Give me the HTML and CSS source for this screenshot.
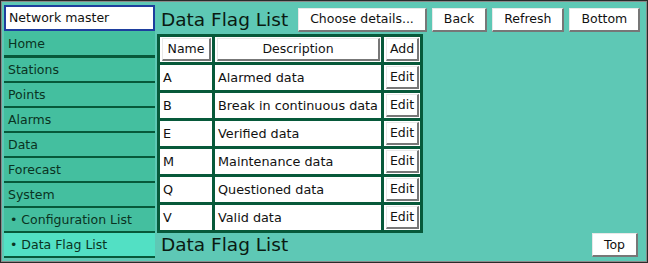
FILE: index.html
```html
<!DOCTYPE html>
<html>
<head>
<meta charset="utf-8">
<link rel="stylesheet" href="styles.css">
</head>
<body>
<div class="frame">
  <nav class="sidebar">
    <div class="network">Network master</div>
    <a class="item home">Home</a>
    <a class="item">Stations</a>
    <a class="item">Points</a>
    <a class="item">Alarms</a>
    <a class="item">Data</a>
    <a class="item">Forecast</a>
    <a class="item">System</a>
    <a class="item sub">• Configuration List</a>
    <a class="item sub active">• Data Flag List</a>
  </nav>
  <main class="main">
    <div class="head">
      <h1 class="title">Data Flag List</h1>
      <button class="btn">Choose details...</button>
      <button class="btn">Back</button>
      <button class="btn">Refresh</button>
      <button class="btn">Bottom</button>
    </div>
    <table class="grid">
      <colgroup><col class="c1"><col class="c2"><col class="c3"></colgroup>
      <tr class="hdr">
        <th><button class="btn full">Name</button></th>
        <th><button class="btn full">Description</button></th>
        <th class="bc"><button class="btn full">Add</button></th>
      </tr>
      <tr><td>A</td><td>Alarmed data</td><td class="bc"><button class="btn full">Edit</button></td></tr>
      <tr><td>B</td><td>Break in continuous data</td><td class="bc"><button class="btn full">Edit</button></td></tr>
      <tr><td>E</td><td>Verified data</td><td class="bc"><button class="btn full">Edit</button></td></tr>
      <tr><td>M</td><td>Maintenance data</td><td class="bc"><button class="btn full">Edit</button></td></tr>
      <tr><td>Q</td><td>Questioned data</td><td class="bc"><button class="btn full">Edit</button></td></tr>
      <tr><td>V</td><td>Valid data</td><td class="bc"><button class="btn full">Edit</button></td></tr>
    </table>
    <div class="foot">
      <h2 class="title">Data Flag List</h2>
      <button class="btn">Top</button>
    </div>
  </main>
</div>
</body>
</html>
```

FILE: styles.css
```css
html, body {
  margin: 0;
  padding: 0;
}
body {
  width: 648px;
  height: 263px;
  overflow: hidden;
  font-family: "DejaVu Sans", Verdana, sans-serif;
  font-size: 12.5px;
  color: #002a1a;
}
.frame {
  box-sizing: border-box;
  width: 648px;
  height: 263px;
  border: 1px solid #2a2a2a;
  outline: 1px solid #8a8a8a;
  outline-offset: -2px;
  display: flex;
  background: #5ec8b5;
}
.sidebar {
  box-sizing: border-box;
  width: 155px;
  flex: none;
  padding: 4px 0 0 3px;
  display: flex;
  flex-direction: column;
  background: #5ec8b5;
}
.network {
  box-sizing: border-box;
  height: 26px;
  width: 151px;
  background: #fff;
  border: 2px solid #1e3e9e;
  padding: 2px 0 0 3px;
  color: #111;
  line-height: 18px;
  white-space: nowrap;
}
.item {
  box-sizing: border-box;
  display: block;
  width: 151px;
  height: 25px;
  padding: 3px 0 0 4px;
  background: #44bf9f;
  border-bottom: 2px solid #07593a;
  color: #0a3322;
  line-height: 17px;
  white-space: nowrap;
}
.item.home {
  height: 27px;
  padding-top: 4px;
  border-bottom-width: 3px;
}
.item.sub {
  padding-left: 6px;
}
.item.active {
  background: #52e0c4;
}
.main {
  flex: 1;
  display: flex;
  flex-direction: column;
  padding: 0 0 0 1px;
}
.head {
  display: flex;
  align-items: center;
  gap: 5px;
  height: 33px;
  padding: 4px 0 0 4px;
  box-sizing: border-box;
}
.title {
  margin: 0 5px 0 0;
  font-size: 18.5px;
  font-weight: normal;
  color: #0a1a12;
  line-height: 22px;
  white-space: nowrap;
}
.btn {
  font-family: "DejaVu Sans", Verdana, sans-serif;
  font-size: 12.5px;
  color: #111;
  background: #fff;
  border-style: solid;
  border-width: 1px 2px 2px 1px;
  border-color: #e8e8e8 #777 #777 #e8e8e8;
  height: 24px;
  padding: 0 11px;
  line-height: 18px;
  white-space: nowrap;
}
.grid {
  border-collapse: separate;
  border-spacing: 3px;
  background: #07593a;
  width: 266px;
  table-layout: fixed;
  font-size: 12.8px;
}
col.c1 { width: 52px; }
col.c2 { width: 166px; }
col.c3 { width: 36px; }
.grid td, .grid th {
  box-sizing: border-box;
  background: #fff;
  height: 25px;
  padding: 0 0 0 3px;
  text-align: left;
  font-weight: normal;
  color: #111;
  white-space: nowrap;
  overflow: hidden;
}
.grid th, .grid td.bc {
  padding: 1px 1px 1px 2px;
}
.btn.full {
  display: block;
  width: 100%;
  height: 23px;
  padding: 0;
  text-align: center;
}
.foot {
  display: flex;
  align-items: center;
  justify-content: space-between;
  padding: 0 9px 0 4px;
  height: 24px;
}
```
